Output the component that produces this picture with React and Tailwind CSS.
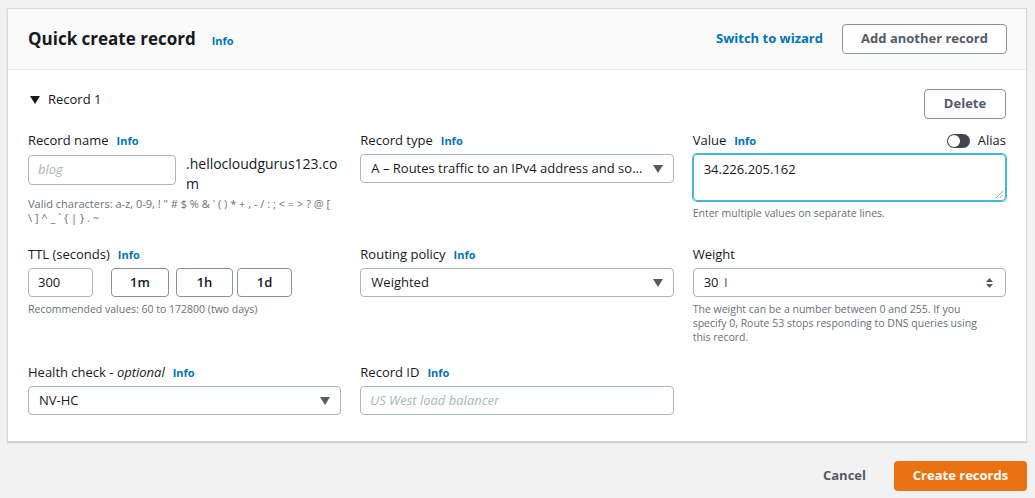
const FONT = { fontFamily: '"Open Sans", "Noto Sans", Arial, sans-serif' }

const VALID = "Valid characters: a-z, 0-9, ! \" # $ % & ' ( ) * + , - / : ; < = > ? @ [ \\ ] ^ _ ` { | } . ~"

function Info() {
  return <span className="ml-2 text-[11px] font-bold text-[#0073bb]">Info</span>
}

function Label({ children, info = true }) {
  return (
    <div className="flex h-[20px] items-center text-[13px] text-[#16191f]">
      <span>{children}</span>
      {info && <Info />}
    </div>
  )
}

function Caret() {
  return (
    <svg width="10" height="8" viewBox="0 0 10 8">
      <path d="M0 0h10L5 8z" fill="#545b64" />
    </svg>
  )
}

function Select({ value }) {
  return (
    <div className="flex h-[29px] items-center justify-between rounded-sm border border-[#aab7b8] bg-white pl-[10px] pr-[10px] text-[13px] text-[#16191f]">
      <span className="truncate">{value}</span>
      <Caret />
    </div>
  )
}

function Help({ children, className = "" }) {
  return <p className={`text-[10.5px] leading-[14px] text-[#687078] ${className}`}>{children}</p>
}

export default function App() {
  return (
    <div style={FONT} className="h-[498px] w-[1035px] bg-[#f2f2f2] pl-[7px] pr-[8px] pt-[8px]">
      <div className="border border-[#d5dbdb] bg-white shadow-[0_1px_1px_rgba(0,0,0,0.15)]">
        {/* header */}
        <div className="flex h-[61px] items-center justify-between border-b border-[#eaeded] bg-[#fafafa] pl-[20px] pr-[19px]">
          <div className="flex items-baseline">
            <h1 className="text-[17px] font-bold text-[#16191f]">Quick create record</h1>
            <span className="ml-[16px] text-[11px] font-bold text-[#0073bb]">Info</span>
          </div>
          <div className="flex items-center gap-[19px]">
            <span className="text-[13px] font-bold text-[#0073bb]">Switch to wizard</span>
            <button className="h-[30px] w-[165px] rounded-sm border border-[#879596] bg-white text-[13px] font-bold text-[#545b64]">
              Add another record
            </button>
          </div>
        </div>

        <div className="pb-[26px] pl-[20px] pr-[20px] pt-[19px]">
          {/* record toggle row */}
          <div className="flex items-center justify-between">
            <div className="-mt-[8px] flex items-center gap-[8px] text-[13px] text-[#16191f]">
              <svg width="10" height="8" viewBox="0 0 10 8" className="ml-[2px]">
                <path d="M0 0h10L5 8z" fill="#16191f" />
              </svg>
              <span>Record 1</span>
            </div>
            <button className="h-[30px] w-[82px] rounded-sm border border-[#879596] bg-white text-[13px] font-bold text-[#545b64]">
              Delete
            </button>
          </div>

          <div className="mt-[12px] grid grid-cols-3 gap-x-[19px]">
            {/* row 1 */}
            <div>
              <Label>Record name</Label>
              <div className="mt-[3px] flex items-start gap-[10px]">
                <div className="mt-[1px] flex h-[30px] w-[148px] shrink-0 items-center rounded-sm border border-[#aab7b8] px-[9px] text-[13px] italic text-[#aab7b8]">
                  blog
                </div>
                <div className="w-[156px] shrink-0 break-all text-[14px] leading-[20px] text-[#16191f]">
                  .hellocloudgurus123.com
                </div>
              </div>
              <Help className="mt-[3px] max-w-[306px] text-[11px] leading-[13px]">{VALID}</Help>
            </div>
            <div>
              <Label>Record type</Label>
              <div className="mt-[3px]">
                <Select value="A – Routes traffic to an IPv4 address and so…" />
              </div>
            </div>
            <div>
              <div className="flex items-center justify-between">
                <Label>Value</Label>
                <div className="flex items-center gap-[8px] text-[13px] text-[#16191f]">
                  <span className="relative inline-block h-[14px] w-[23px] rounded-full bg-[#414750]">
                    <span className="absolute left-[1px] top-[1px] h-[12px] w-[12px] rounded-full bg-white" />
                  </span>
                  <span>Alias</span>
                </div>
              </div>
              <div className="relative mt-[3px] h-[47px] rounded-sm border border-[#44b9d6] px-[10px] pt-[5px] text-[13px] text-[#16191f] shadow-[0_0_0_1px_#44b9d6]">
                34.226.205.162
                <svg width="7" height="7" viewBox="0 0 7 7" className="absolute bottom-[2px] right-[2px]">
                  <path d="M7 0L0 7M7 3.5L3.5 7" stroke="#879596" strokeWidth="0.8" />
                </svg>
              </div>
              <Help className="mt-[5px]">Enter multiple values on separate lines.</Help>
            </div>

            {/* row 2 */}
            <div className="mt-[20px]">
              <Label>TTL (seconds)</Label>
              <div className="mt-[3px] flex items-center">
                <div className="flex h-[29px] w-[65px] items-center rounded-sm border border-[#aab7b8] px-[9px] text-[13px] text-[#16191f]">
                  300
                </div>
                <button className="ml-[18px] h-[29px] w-[58px] rounded-sm border border-[#879596] bg-white text-[13px] font-semibold text-[#16191f]">1m</button>
                <button className="ml-[7px] h-[29px] w-[57px] rounded-sm border border-[#879596] bg-white text-[13px] font-semibold text-[#16191f]">1h</button>
                <button className="ml-[4px] h-[29px] w-[55px] rounded-sm border border-[#879596] bg-white text-[13px] font-semibold text-[#16191f]">1d</button>
              </div>
              <Help className="mt-[5px]">Recommended values: 60 to 172800 (two days)</Help>
            </div>
            <div className="mt-[20px]">
              <Label>Routing policy</Label>
              <div className="mt-[3px]">
                <Select value="Weighted" />
              </div>
            </div>
            <div className="mt-[20px]">
              <Label info={false}>Weight</Label>
              <div className="mt-[3px] flex h-[29px] items-center justify-between rounded-sm border border-[#aab7b8] pl-[10px] pr-[12px] text-[13px] text-[#16191f]">
                <span>
                  30 <span className="ml-[2px] text-[#545b64]">I</span>
                </span>
                <svg width="7" height="10" viewBox="0 0 7 10">
                  <path d="M0 4L3.5 0L7 4zM0 6L3.5 10L7 6z" fill="#545b64" />
                </svg>
              </div>
              <Help className="mt-[5px] pr-[20px]">
                The weight can be a number between 0 and 255. If you specify 0, Route 53 stops responding to DNS queries using this record.
              </Help>
            </div>

            {/* row 3 */}
            <div className="mt-[19px]">
              <div className="flex h-[20px] items-center text-[13px] text-[#16191f]">
                <span>
                  Health check - <i>optional</i>
                </span>
                <Info />
              </div>
              <div className="mt-[3px]">
                <Select value="NV-HC" />
              </div>
            </div>
            <div className="mt-[19px]">
              <Label>Record ID</Label>
              <div className="mt-[3px] flex h-[29px] items-center rounded-sm border border-[#aab7b8] px-[9px] text-[13px] italic text-[#aab7b8]">
                US West load balancer
              </div>
            </div>
            <div />
          </div>
        </div>
      </div>

      {/* footer */}
      <div className="mt-[19px] flex items-center justify-end gap-[28px] pr-0">
        <span className="text-[13px] font-bold text-[#545b64]">Cancel</span>
        <button className="h-[30px] w-[133px] rounded-sm bg-[#ec7211] text-[13px] font-bold text-white">
          Create records
        </button>
      </div>
    </div>
  )
}
